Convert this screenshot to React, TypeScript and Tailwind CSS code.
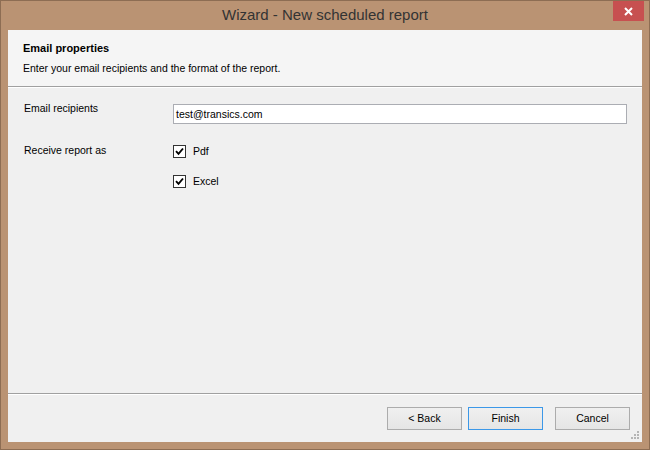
import React from 'react';

const font = { fontFamily: '"Liberation Sans", Arial, sans-serif' };

const Check = ({ label }: { label: string }) => (
  <label className="flex items-center h-[13px] gap-[7px] text-[10.5px] text-black">
    <span className="w-[13px] h-[13px] border border-[#333] bg-white flex items-center justify-center">
      <svg width="9" height="9" viewBox="0 0 9 9">
        <path d="M1 4.2 L3.5 6.8 L8 1.5" fill="none" stroke="#000" strokeWidth="1.9" />
      </svg>
    </span>
    {label}
  </label>
);

const WinButton = ({ children, focused, className }: { children: React.ReactNode; focused?: boolean; className?: string }) => (
  <button
    className={
      (focused ? 'border-[#3c98e8] ' : 'border-[#acacac] ') +
      'w-[75px] h-[23px] border bg-gradient-to-b from-[#f0f0f0] to-[#e5e5e5] text-[10.5px] leading-[21px] text-black ' +
      (className ?? '')
    }
  >
    {children}
  </button>
);

export default function App() {
  return (
    <div className="w-[650px] h-[450px] bg-[#ba9373] border border-[#8d6d53] flex flex-col" style={font}>
      {/* title bar */}
      <div className="h-[29px] grid grid-cols-[38px_1fr_38px]">
        <div />
        <div className="text-center text-[15px] leading-[29px] text-[#333] -mt-[1px]">Wizard - New scheduled report</div>
        <div className="flex justify-end pr-[5px]">
          <div className="w-[31px] h-[20px] bg-[#c75050] flex items-center justify-center">
            <svg width="9" height="9" viewBox="0 0 9 9">
              <path d="M1 1 L8 8 M8 1 L1 8" stroke="#fff" strokeWidth="2" />
            </svg>
          </div>
        </div>
      </div>

      {/* client area */}
      <div className="flex-1 mx-[7px] mb-[7px] bg-[#f0f0f0] flex flex-col">
        <div className="h-[56px] bg-[#f5f5f5] pl-[15px] pt-[12px]">
          <div className="text-[11px] leading-[13px] font-bold text-black">Email properties</div>
          <div className="text-[10.5px] leading-[13px] text-black mt-[7px]">
            Enter your email recipients and the format of the report.
          </div>
        </div>
        <div className="h-px bg-[#a0a0a0]" />
        <div className="h-px bg-white" />

        <div className="flex-1 pl-[16px] pr-[15px]">
          <div className="flex items-start">
            <div className="w-[149px] pt-[14px] text-[10.5px] leading-[13px] text-black">Email recipients</div>
            <div className="flex-1 mt-[16px] h-[20px] border border-[#abadb3] bg-white pl-[2px] text-[10.5px] leading-[18px] text-black">
              test@transics.com
            </div>
          </div>
          <div className="flex items-start">
            <div className="w-[149px] pt-[20px] text-[10.5px] leading-[13px] text-black">Receive report as</div>
            <div className="flex flex-col gap-[17px] pt-[21px]">
              <Check label="Pdf" />
              <Check label="Excel" />
            </div>
          </div>
        </div>

        <div className="h-px bg-[#a0a0a0]" />
        <div className="h-px bg-white" />
        <div className="relative h-[47px] flex justify-end items-start pt-[12px] pr-[12px]">
          <WinButton>&lt; Back</WinButton>
          <WinButton focused className="ml-[6px]">Finish</WinButton>
          <WinButton className="ml-[12px]">Cancel</WinButton>
          <svg className="absolute right-[2px] bottom-[2px]" width="9" height="9" viewBox="0 0 9 9">
            <g fill="#b5b5b5">
              <rect x="6" y="0" width="2" height="2" />
              <rect x="3" y="3" width="2" height="2" />
              <rect x="6" y="3" width="2" height="2" />
              <rect x="0" y="6" width="2" height="2" />
              <rect x="3" y="6" width="2" height="2" />
              <rect x="6" y="6" width="2" height="2" />
            </g>
          </svg>
        </div>
      </div>
    </div>
  );
}
